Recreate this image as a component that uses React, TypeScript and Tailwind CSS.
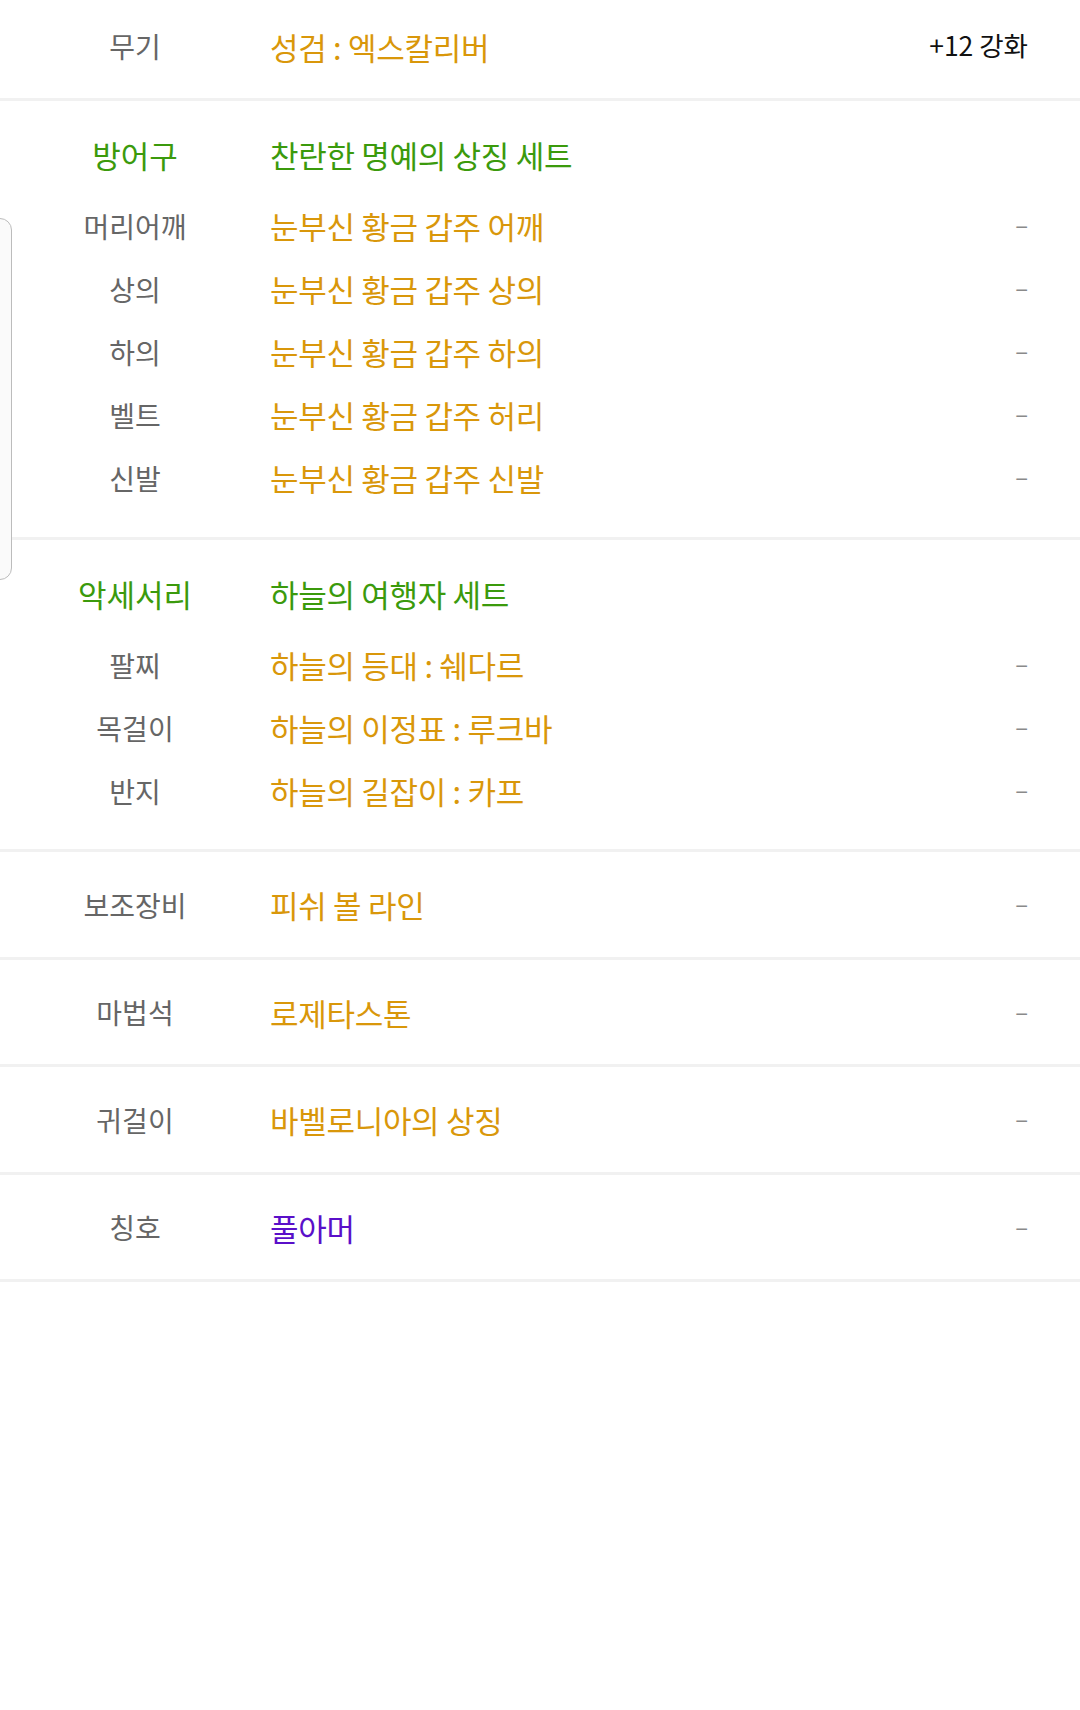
import React from 'react';

type Item = { slot: string; name: string; extra?: string };

const FONT = { fontFamily: '"Noto Sans CJK KR", "Noto Sans", sans-serif' };

const armor: Item[] = [
    { slot: '머리어깨', name: '눈부신 황금 갑주 어깨' },
    { slot: '상의', name: '눈부신 황금 갑주 상의' },
    { slot: '하의', name: '눈부신 황금 갑주 하의' },
    { slot: '벨트', name: '눈부신 황금 갑주 허리' },
    { slot: '신발', name: '눈부신 황금 갑주 신발' },
];

const accessories: Item[] = [
    { slot: '팔찌', name: '하늘의 등대 : 쉐다르' },
    { slot: '목걸이', name: '하늘의 이정표 : 루크바' },
    { slot: '반지', name: '하늘의 길잡이 : 카프' },
];

const singles: { slot: string; name: string; color: string; h: string }[] = [
    { slot: '보조장비', name: '피쉬 볼 라인', color: 'text-[#d9970a]', h: 'h-[105px]' },
    { slot: '마법석', name: '로제타스톤', color: 'text-[#d9970a]', h: 'h-[104px]' },
    { slot: '귀걸이', name: '바벨로니아의 상징', color: 'text-[#d9970a]', h: 'h-[105px]' },
    { slot: '칭호', name: '풀아머', color: 'text-[#5a0fc9]', h: 'h-[104px]' },
];

function Divider() {
    return <div className="h-[3px] bg-[#f1f1f1]" />;
}

function Dash() {
    return <span className="text-[24px] leading-none text-[#8a8a8a]">–</span>;
}

function Row({ slot, name, nameColor, right, h }: { slot: string; name: string; nameColor: string; right: React.ReactNode; h: string }) {
    return (
        <div className={`flex items-center ${h}`}>
            <div className="w-[270px] shrink-0 text-center text-[28px] leading-none text-[#666666]">{slot}</div>
            <div className={`flex-1 text-[31px] leading-none tracking-[-0.3px] ${nameColor}`}>{name}</div>
            <div className="pr-[52px]">{right}</div>
        </div>
    );
}

function SetSection({ slot, setName, items, pb }: { slot: string; setName: string; items: Item[]; pb: string }) {
    return (
        <div className={`pt-[22px] ${pb}`}>
            <div className="flex items-center h-[63px] mb-[8px]">
                <div className="w-[270px] shrink-0 text-center text-[31px] leading-none text-[#3b9a0c]">{slot}</div>
                <div className="flex-1 text-[31px] leading-none tracking-[-0.3px] text-[#3b9a0c]">{setName}</div>
            </div>
            {items.map((it) => (
                <Row key={it.slot} slot={it.slot} name={it.name} nameColor="text-[#d9970a]" right={<Dash />} h="h-[63px]" />
            ))}
        </div>
    );
}

export default function App() {
    return (
        <div className="relative w-[1080px] h-[1710px] bg-white overflow-hidden" style={FONT}>
            {/* weapon */}
            <div className="pb-[6px]">
                <Row
                    slot="무기"
                    name="성검 : 엑스칼리버"
                    nameColor="text-[#d9970a]"
                    right={<span className="text-[26.5px] leading-none text-[#111111]">+12 강화</span>}
                    h="h-[92px]"
                />
            </div>
            <Divider />

            <SetSection slot="방어구" setName="찬란한 명예의 상징 세트" items={armor} pb="pb-[28px]" />
            <Divider />

            <SetSection slot="악세서리" setName="하늘의 여행자 세트" items={accessories} pb="pb-[27px]" />
            <Divider />

            {singles.map((s) => (
                <div key={s.slot}>
                    <Row slot={s.slot} name={s.name} nameColor={s.color} right={<Dash />} h={s.h} />
                    <Divider />
                </div>
            ))}

            {/* edge of a panel peeking from the left */}
            <div className="absolute left-[-40px] top-[218px] w-[52px] h-[362px] rounded-[12px] border-[1.5px] border-[#bcbcbc] bg-[#fafafa]" />
        </div>
    );
}
